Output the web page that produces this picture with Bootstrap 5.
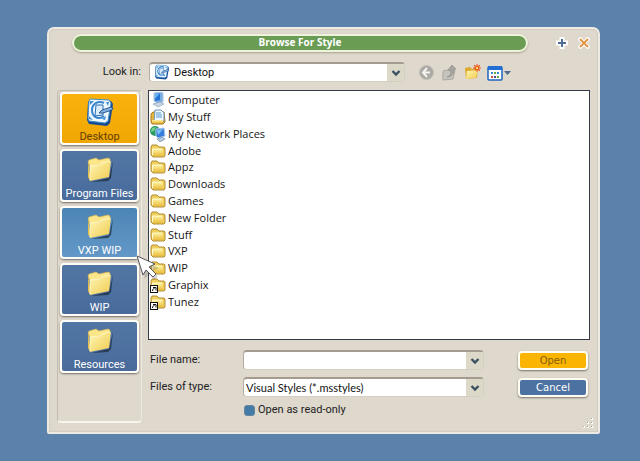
<!DOCTYPE html>
<html lang="en">
<head>
<meta charset="utf-8">
<meta name="viewport" content="width=device-width, initial-scale=1">
<title>Browse For Style</title>
<link href="https://cdn.jsdelivr.net/npm/bootstrap@5.3.0/dist/css/bootstrap.min.css" rel="stylesheet">
<style>
body{background:#5b82aa;font-family:Roboto,"Liberation Sans",sans-serif;font-size:11px;line-height:16px;color:#222;padding:27px 40px 27px 47px}
svg{display:block;flex:none}
button{font:inherit;color:inherit;padding:0;border:0;background:none}
.dialog{background:#ded8cd;border:2px solid #edeae3;border-radius:7px 7px 2px 2px;min-height:calc(100vh - 54px);box-shadow:inset 0 0 2px #bcb5a5;padding:4px 8px 9px}
.titlebar{height:20px;padding-left:15px;gap:10px}
.caption{background:#6a9d53;border:2px solid #eef4dc;border-radius:10px;height:18px;color:#fff;font:bold 10px/13px "Open Sans",sans-serif;box-shadow:0 1px 2px #aaa18f;margin-right:18px}
.lookin{height:20px;margin-top:9px}
.lookin-label{width:84px}
.combo{height:20px;background:#fff;border:1px solid #d5cfbf;border-top:2px solid #a49c8e;border-left-color:#b4ad9f;border-radius:4px}
.combo input,.combo select{appearance:none;border:0;background:none;outline:0;min-width:0;padding:0 2px;font:inherit;color:#111}
.combo .look-select{font-size:11px;padding-left:4px}
.combo .type-select{font-family:Lato,sans-serif}
.arrow{width:17px;background:#dcd9c9}
.look-combo{width:256px;margin-left:8px}
.tools{margin-left:13px;gap:6px}
.main{margin-top:8px;gap:6px}
.places{width:85px;padding:1px 2px 8px;border:1px solid #c2bbb0;border-bottom:2px solid #f8f5ee;border-right-color:#eee9df;border-radius:4px;gap:4px}
.place{height:53px;border:2px solid #fffdf5;border-radius:4px;background:linear-gradient(#5176a4,#486b9b);color:#fff;line-height:14px;box-shadow:0 1px 2px #756d69;padding-top:3px}
.place svg{margin:0 auto 3px}
.place.chosen{background:linear-gradient(#f9b10b,#f0a702);color:#643e0b}
.place.hovered{background:linear-gradient(#4b85b5,#6398c7)}
.pointer{position:absolute;left:74px;top:47px;z-index:2}
.files{height:250px;background:#fff;border:1px solid #333b48;padding-top:1px}
.files ul{height:218px;font:11px/16px "Open Sans",sans-serif;color:#161616}
.files li{gap:2px;padding-left:1px}
.fields{margin-top:10px;padding:0 2px;row-gap:7px;display:grid;grid-template-columns:93px minmax(0,1fr) 70px;align-items:center}
.fields .combo{margin-right:34px}
.act{height:19px;border:2px solid #fffcf2;border-radius:4px;font:10px/15px "DejaVu Sans",sans-serif;box-shadow:0 1px 2px #7b756c}
.act.open{background:#fab402;color:#85600c}
.act.cancel{background:#4c72a1;color:#fff}
.readonly-row{line-height:12px}
.readonly-box{appearance:none;width:11px;height:11px;border-radius:3px;background:#447ba5;border:1px solid #6386a0;margin:0 3px 0 1px}
.grip{margin:0 4px 3px 0}
</style>
<script src="https://cdn.jsdelivr.net/npm/bootstrap@5.3.0/dist/js/bootstrap.bundle.min.js"></script>
</head>
<body>
<svg width="0" height="0" class="position-absolute" aria-hidden="true">
<defs>
<linearGradient id="fy" x2="0" y2="1"><stop stop-color="#fff2a0"/><stop offset="1" stop-color="#e8bd3d"/></linearGradient>
<linearGradient id="fl" x2="1" y2="1"><stop stop-color="#fff6b4"/><stop offset="1" stop-color="#f0cb50"/></linearGradient>
<symbol id="bigfolder" viewBox="0 0 28 28"><path d="M5 27l18-4 4-17-2 17-3 3z" fill="#1c2636" opacity=".7"/><path d="M2 7l1-2 7-2 3 2 9-2 2 1v4L4 12z" fill="#fbe68a" stroke="#d9b24a" stroke-width=".6"/><path d="M2 6l3 19-1 1-2-4z" fill="#e3bd4c"/><path d="M4 11l10-1 2-2 9-2-2 16-19 4z" fill="url(#fl)"/><path d="M4 25V11l10-1 2-2 8-2" fill="none" stroke="#fffbd6" stroke-width=".8"/></symbol>
<symbol id="desk" viewBox="0 0 30 30"><path d="M5 3l21 1 2 3-3 19-3 3-18-2-2-4L3 5z" fill="#174b91"/><path d="M5 2l19 1 2 3-3 18-3 2-16-2-1-3L4 4z" fill="#eef8ff" stroke="#3f8cc9"/><path d="M5 4h4L5 8zm16 1h3l-1 4zM4 19l4 4-4-1zm17 0l-1 4-3-1z" fill="#3f8bd2"/><path d="M19 6C13 3 7 7 7 13c0 8 8 10 12 6" fill="none" stroke="#3a86cf" stroke-width="2"/><path d="M11 8h7v10l-8 1z" fill="#d9edfd" stroke="#2c6cb4"/><path d="M14 16l3-3 9-3 2 1-1 2-9 3z" fill="#7fb2e2" stroke="#153f78" stroke-width=".8"/></symbol>
<symbol id="folder" viewBox="0 0 16 16"><path d="M1 4l1-2h5l2 2h5l1 1v8l-1 1H3l-2-2z" fill="#efce5c" stroke="#a98228" stroke-width=".9"/><path d="M3 6h9l1 1v6H3z" fill="url(#fy)"/><path d="M2.500 12V6H12" fill="none" stroke="#fffbd0"/></symbol>
<symbol id="shortcut" viewBox="0 0 16 16"><use href="#folder"/><rect x=".5" y="8.500" width="7" height="7" fill="#fff" stroke="#111"/><path d="M2.500 14c0-2 1-2.500 2-2.500M3 10.500h3v3" fill="none" stroke="#111"/></symbol>
<symbol id="computer" viewBox="0 0 16 16"><path d="M4 1l7-1 2 1v9l-6 1-3-2z" fill="#79aee3" stroke="#a9c5df"/><path d="M5 2l5-1v7l-5 1z" fill="#2472d3"/><path d="M5 2l5-1-5 6z" fill="#69b3f2"/><path d="M3 12l7-2 4 2-6 3z" fill="#c9d7e5" stroke="#8ba3bd" stroke-width=".7"/></symbol>
<symbol id="stuff" viewBox="0 0 16 16"><path d="M1 5l2-2h11l1 10-2 2H2l-1-2z" fill="#e5b539" stroke="#a77820"/><path d="M5 1h6l3 3v8H4z" fill="#edf7ff" stroke="#6992b9"/><path d="M6 4h5M6 6h6M6 8h6" stroke="#5799d0"/><path d="M2 11h11v3H2z" fill="url(#fy)"/></symbol>
<symbol id="network" viewBox="0 0 16 16"><circle cx="5" cy="5" r="5" fill="#2c9b68"/><path d="M2 2l4-1-2 4-3 1z" fill="#75d288"/><path d="M6 3l8-1 1 8-7 2-2-2z" fill="#357edb" stroke="#aacbee"/><path d="M7 4l6-1-5 6z" fill="#7dc3fa"/><path d="M7 13l5-2 3 2-5 3z" fill="#b6c7dc" stroke="#718cab" stroke-width=".7"/></symbol>
<symbol id="chev" viewBox="0 0 10 10"><path d="M1.500 3L5 6.500 8.500 3" fill="none" stroke="#3b5061" stroke-width="2.400"/></symbol>
</defs>
</svg>
<main class="dialog d-flex flex-column position-relative">
  <header class="titlebar d-flex align-items-center">
    <h1 class="caption flex-fill text-center mb-0">Browse For Style</h1>
    <button aria-label="Maximize"><svg width="12" height="12" viewBox="0 0 12 12"><path d="M6 0v12M0 6h12" stroke="#fff" stroke-width="5"/><path d="M6 2v8M2 6h8" stroke="#506f98" stroke-width="2"/></svg></button>
    <button aria-label="Close"><svg width="12" height="12" viewBox="0 0 12 12"><path d="M1 1l10 10M11 1L1 11" stroke="#fff" stroke-width="4"/><path d="M2 2l8 8M10 2l-8 8" stroke="#df9444" stroke-width="2"/></svg></button>
  </header>
  <div class="lookin d-flex align-items-center">
    <label for="look" class="lookin-label text-end">Look in:</label>
    <div class="combo look-combo d-flex align-items-stretch">
      <svg width="16" height="16" class="ms-1"><use href="#desk"/></svg>
      <select id="look" class="look-select flex-fill"><option>Desktop</option></select>
      <span class="arrow d-flex align-items-center justify-content-center"><svg width="10" height="10"><use href="#chev"/></svg></span>
    </div>
    <div class="tools d-flex align-items-center">
      <button aria-label="Back"><svg width="17" height="17" viewBox="0 0 17 17"><circle cx="8.500" cy="8.500" r="7" fill="#aaa9a5" stroke="#c3c0b9"/><path d="M9 4L5 8.500 9 13M5 8.500h7" fill="none" stroke="#f5f4ef" stroke-width="2"/></svg></button>
      <button aria-label="Up one level"><svg width="17" height="17" viewBox="0 0 17 17"><path d="M2 7l5-1 1 1 6-1-2 9-10 1z" fill="#c7c4bd" stroke="#aaa79f"/><path d="M6 13c3-1 4-3 4-7H7l4-5 4 4h-2c0 5-2 8-7 8z" fill="#a6a49f" stroke="#8e8c87" stroke-width=".6"/></svg></button>
      <button aria-label="Create new folder"><svg width="17" height="17" viewBox="0 0 17 17"><path d="M1 4l5-1 2 2 6-1-1 10-11 1z" fill="#dcaa2d"/><path d="M3 7l11-1-2 8-10 1z" fill="url(#fl)"/><circle cx="13" cy="4" r="2" fill="#ffd35c" stroke="#e8571f" stroke-width="1.500"/><path d="M13 0v1M13 7v1M9 4h1M16 4h1M10 1l1 1M15 6l1 1M16 1l-1 1" stroke="#e8571f"/></svg></button>
      <button aria-label="View menu"><svg width="25" height="17" viewBox="0 0 25 17"><rect x="1" y="3" width="14" height="13" rx="1" fill="#fff" stroke="#1f65bd" stroke-width="1.500"/><path d="M1 2h14v4H1z" fill="#2270d4"/><path d="M4 8h2v2H4zm6 0h2v2h-2z" fill="#368acd"/><path d="M7 8h2v2H7zm3 4h2v2h-2z" fill="#69a53d"/><path d="M4 12h2v2H4z" fill="#cc5448"/><path d="M7 12h2v2H7z" fill="#444c8e"/><path d="M17 7h7l-3.500 4z" fill="#506b90"/></svg></button>
    </div>
  </div>
  <div class="main d-flex flex-fill">
    <nav class="places d-flex flex-column flex-shrink-0" aria-label="Places">
      <button class="place chosen"><svg width="30" height="30"><use href="#desk"/></svg>Desktop</button>
      <button class="place"><svg width="28" height="30"><use href="#bigfolder"/></svg>Program Files</button>
      <button class="place hovered position-relative"><svg width="28" height="30"><use href="#bigfolder"/></svg>VXP WIP
        <span class="pointer"><svg width="25" height="26" viewBox="0 0 25 26"><path d="M4 4l19 9-6 3 5 6-4 3-5-6-4 5z" fill="#333" opacity=".2"/><path d="M1 1l18 8-6 3 7 7-3 3-7-7-3 5z" fill="#fff" stroke="#54565b"/></svg></span>
      </button>
      <button class="place"><svg width="28" height="30"><use href="#bigfolder"/></svg>WIP</button>
      <button class="place"><svg width="28" height="30"><use href="#bigfolder"/></svg>Resources</button>
    </nav>
    <div class="flex-fill">
      <div class="files">
        <ul class="list-unstyled d-flex flex-column mb-0">
          <li class="d-flex flex-fill align-items-center"><svg width="16" height="16"><use href="#computer"/></svg>Computer</li>
          <li class="d-flex flex-fill align-items-center"><svg width="16" height="16"><use href="#stuff"/></svg>My Stuff</li>
          <li class="d-flex flex-fill align-items-center"><svg width="16" height="16"><use href="#network"/></svg>My Network Places</li>
          <li class="d-flex flex-fill align-items-center"><svg width="16" height="16"><use href="#folder"/></svg>Adobe</li>
          <li class="d-flex flex-fill align-items-center"><svg width="16" height="16"><use href="#folder"/></svg>Appz</li>
          <li class="d-flex flex-fill align-items-center"><svg width="16" height="16"><use href="#folder"/></svg>Downloads</li>
          <li class="d-flex flex-fill align-items-center"><svg width="16" height="16"><use href="#folder"/></svg>Games</li>
          <li class="d-flex flex-fill align-items-center"><svg width="16" height="16"><use href="#folder"/></svg>New Folder</li>
          <li class="d-flex flex-fill align-items-center"><svg width="16" height="16"><use href="#folder"/></svg>Stuff</li>
          <li class="d-flex flex-fill align-items-center"><svg width="16" height="16"><use href="#folder"/></svg>VXP</li>
          <li class="d-flex flex-fill align-items-center"><svg width="16" height="16"><use href="#folder"/></svg>WIP</li>
          <li class="d-flex flex-fill align-items-center"><svg width="16" height="16"><use href="#shortcut"/></svg>Graphix</li>
          <li class="d-flex flex-fill align-items-center"><svg width="16" height="16"><use href="#shortcut"/></svg>Tunez</li>
        </ul>
      </div>
      <form class="fields">
        <label for="fname">File name:</label>
        <div class="combo d-flex"><input id="fname" type="text" class="flex-fill"><button type="button" aria-label="Recent names" class="arrow d-flex align-items-center justify-content-center"><svg width="10" height="10"><use href="#chev"/></svg></button></div>
        <button type="button" class="act open">Open</button>
        <label for="ftype">Files of type:</label>
        <div class="combo d-flex"><select id="ftype" class="type-select flex-fill"><option>Visual Styles (*.msstyles)</option></select><span class="arrow d-flex align-items-center justify-content-center"><svg width="10" height="10"><use href="#chev"/></svg></span></div>
        <button type="button" class="act cancel">Cancel</button>
        <span></span>
        <div class="readonly-row d-flex align-items-center"><input type="checkbox" id="ro" class="readonly-box"><label for="ro">Open as read-only</label></div>
      </form>
    </div>
  </div>
  <svg width="12" height="12" viewBox="0 0 12 12" class="position-absolute bottom-0 end-0 grip" aria-hidden="true"><g fill="#fff"><path d="M9 1h2v2H9zM5 5h2v2H5zM9 5h2v2H9zM1 9h2v2H1zM5 9h2v2H5zM9 9h2v2H9z"/></g><g fill="#aaa398"><path d="M9 1h1v1H9zM5 5h1v1H5zM9 5h1v1H9zM1 9h1v1H1zM5 9h1v1H5zM9 9h1v1H9z"/></g></svg>
</main>
</body>
</html>
